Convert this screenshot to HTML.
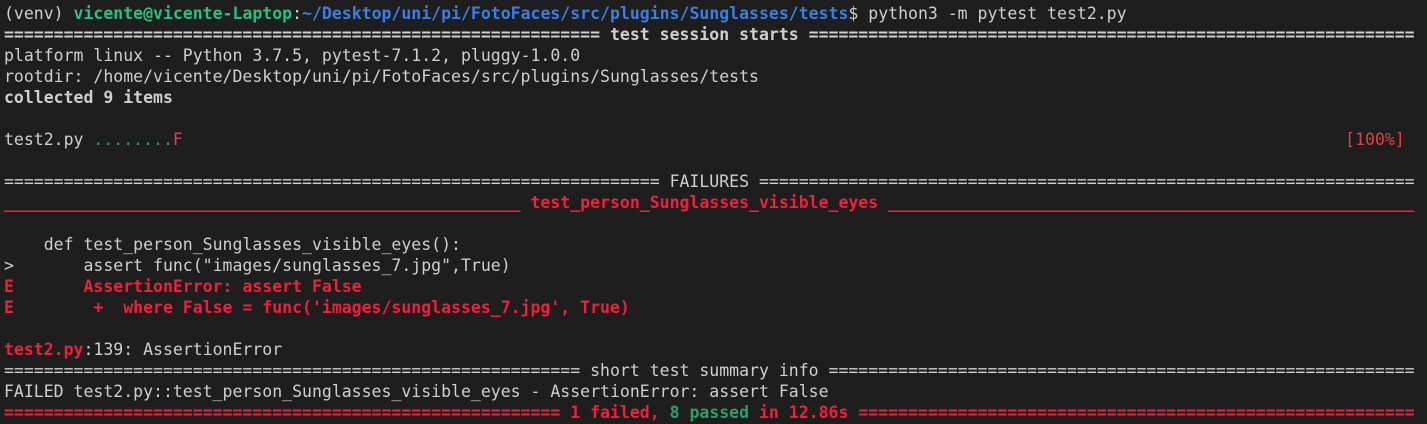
<!DOCTYPE html><html><head><meta charset="utf-8"><style>
html,body{margin:0;padding:0;background:#1e1e1e;width:1427px;height:424px;overflow:hidden}
pre{margin:0;padding:3px 0 0 4px;font-family:"DejaVu Sans Mono","Liberation Mono",monospace;font-size:16.5px;line-height:21px;color:#d0cfcc;white-space:pre}
.g{color:#26c281;font-weight:bold}.gn{color:#26a269}.b{color:#3a7ee4;font-weight:bold}
.r{color:#f0203a;font-weight:bold}.rn{color:#e0404a}.bd{font-weight:bold}
</style></head><body><pre>(venv) <span class="g">vicente@vicente-Laptop</span>:<span class="b">~/Desktop/uni/pi/FotoFaces/src/plugins/Sunglasses/tests</span>$ python3 -m pytest test2.py
<span class="bd">============================================================ test session starts =============================================================</span>
platform linux -- Python 3.7.5, pytest-7.1.2, pluggy-1.0.0
rootdir: /home/vicente/Desktop/uni/pi/FotoFaces/src/plugins/Sunglasses/tests
<span class="bd">collected 9 items</span>

test2.py <span class="gn">........</span><span class="rn">F</span>                                                                                                                     <span class="rn">[100%]</span>

================================================================== FAILURES ==================================================================
<span class="r">____________________________________________________ test_person_Sunglasses_visible_eyes _____________________________________________________</span>

    def test_person_Sunglasses_visible_eyes():
&gt;       assert func("images/sunglasses_7.jpg",True)
<span class="r">E       AssertionError: assert False</span>
<span class="r">E        +  where False = func('images/sunglasses_7.jpg', True)</span>

<span class="r">test2.py</span>:139: AssertionError
========================================================== short test summary info ===========================================================
FAILED test2.py::test_person_Sunglasses_visible_eyes - AssertionError: assert False
<span class="r">======================================================== 1 failed, </span><span class="g" style="color:#26a269">8 passed</span><span class="r"> in 12.86s ========================================================</span></pre></body></html>
